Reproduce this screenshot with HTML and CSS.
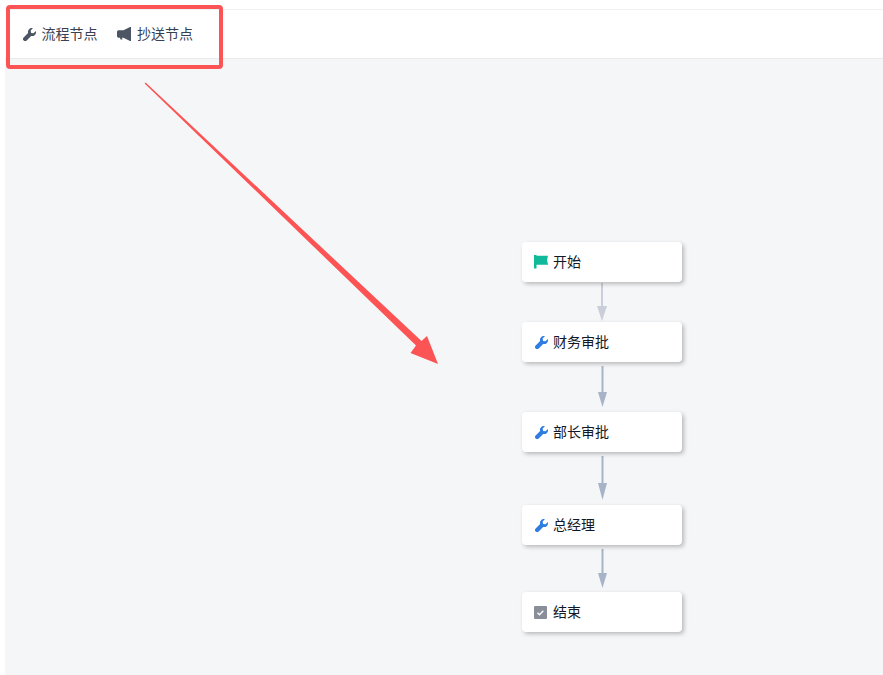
FILE: index.html
```html
<!DOCTYPE html>
<html lang="zh">
<head>
<meta charset="utf-8">
<title>流程</title>
<link rel="stylesheet" href="styles.css">
</head>
<body>
<div class="page">
  <div class="toolbar">
    <div class="tool">
      <svg class="ic-tool" viewBox="0 0 16 16"><path d="M15.800 3.800a4.800 4.800 0 0 1-5.800 6L4.600 15.300a2.400 2.400 0 0 1-3.800-3.700l5.500-5.400a4.800 4.800 0 0 1 5.900-6L9.400 3l.6 3 3 .6z"/></svg>
      <span>流程节点</span>
    </div>
    <div class="tool">
      <svg class="ic-horn" viewBox="0 0 14 14"><path d="M14 0v14h-1L6.500 10.800H5L5.500 12.500H3.500L3 10.800H1L0 9.500V4.500L1 3.200H6.500L13 0z"/></svg>
      <span>抄送节点</span>
    </div>
  </div>
  <div class="canvas">
    <svg class="edges" viewBox="0 0 878 616">
      <g class="edge-light">
        <path d="M597 224v33"/><path class="head" d="M592 247h10l-5 15z"/>
      </g>
      <g class="edge">
        <path d="M597.500 307v33"/><path class="head" d="M593 333h9l-4.500 15z"/>
        <path d="M597.500 397v34"/><path class="head" d="M593 424h9l-4.500 17z"/>
        <path d="M597.500 490v27"/><path class="head" d="M593 514h9l-4.500 15z"/>
      </g>
    </svg>
    <div class="node n1">
      <svg class="ic-flag" viewBox="0 0 14 14"><path d="M0 0h2.500v.8H14l-1 4.300 1 4.700H2.500V13.500H0z"/></svg>
      <span>开始</span>
    </div>
    <div class="node n2">
      <svg class="ic-tool blue" viewBox="0 0 16 16"><path d="M15.800 3.800a4.800 4.800 0 0 1-5.800 6L4.600 15.300a2.400 2.400 0 0 1-3.800-3.700l5.500-5.400a4.800 4.800 0 0 1 5.900-6L9.400 3l.6 3 3 .6z"/></svg>
      <span>财务审批</span>
    </div>
    <div class="node n3">
      <svg class="ic-tool blue" viewBox="0 0 16 16"><path d="M15.800 3.800a4.800 4.800 0 0 1-5.800 6L4.600 15.300a2.400 2.400 0 0 1-3.800-3.700l5.500-5.400a4.800 4.800 0 0 1 5.900-6L9.400 3l.6 3 3 .6z"/></svg>
      <span>部长审批</span>
    </div>
    <div class="node n4">
      <svg class="ic-tool blue" viewBox="0 0 16 16"><path d="M15.800 3.800a4.800 4.800 0 0 1-5.800 6L4.600 15.300a2.400 2.400 0 0 1-3.800-3.700l5.500-5.400a4.800 4.800 0 0 1 5.900-6L9.400 3l.6 3 3 .6z"/></svg>
      <span>总经理</span>
    </div>
    <div class="node n5">
      <svg class="ic-check" viewBox="0 0 13 13"><rect width="13" height="13" rx="1" fill="#8a8e99"/><path d="M3.500 6.800l2 2 3.800-4" fill="none" stroke="#fff" stroke-width="1.300"/></svg>
      <span>结束</span>
    </div>
  </div>
  <svg class="annotation" viewBox="0 0 883 675">
    <rect x="8" y="7" width="213" height="60" rx="2" fill="none" stroke="#fc5454" stroke-width="4"/>
    <path d="M144.600 83.400 L145.600 82.600 L421.500 341 L427 336 L438 364 L410.500 353 L416 345.500 Z" fill="#fc5454"/>
  </svg>
</div>
</body>
</html>
```
FILE: styles.css
```css
* { box-sizing: border-box; }
html, body { margin: 0; padding: 0; background: #fff; }
body { font-family: "Noto Sans CJK SC", "Noto Sans", sans-serif; font-size: 14px; }
.page { position: relative; width: 883px; height: 675px; overflow: hidden; padding: 9px 0 0 5px; display: flex; flex-direction: column; }
.toolbar { height: 50px; flex: none; display: flex; align-items: center; gap: 19.500px; padding: 0 0 0 18px; background: #fff; border-top: 1px solid #f0f1f3; border-bottom: 1px solid #e9eaec; color: #374151; }
.tool { display: flex; align-items: center; gap: 5.500px; line-height: 20px; }
.tool span, .node span { padding-bottom: 2px; }
.ic-tool { width: 13px; height: 13px; fill: #4b5563; flex: none; }
.ic-tool.blue { fill: #2f7de1; margin-left: 1px; }
.ic-horn { width: 14px; height: 14px; fill: #4b5563; flex: none; margin-right: .5px; }
.canvas { position: relative; flex: 1; background: #f5f6f8; }
.edges { position: absolute; left: 0; top: 0; width: 878px; height: 616px; }
.edge path { stroke: #a7b4c8; stroke-width: 2; fill: none; }
.edge-light path { stroke: #c9ced9; stroke-width: 2; fill: none; }
.edge path.head { fill: #a7b4c8; stroke: none; }
.edge-light path.head { fill: #c9ced9; stroke: none; }
.node { position: absolute; left: 517px; width: 160px; height: 40px; display: flex; align-items: center; gap: 5px; padding-left: 12px; background: #fff; border-radius: 4px; box-shadow: 2px 2px 4px rgba(0,0,0,.25); color: #111827; }
.n1 { top: 183px; }
.n2 { top: 263px; }
.n3 { top: 353px; }
.n4 { top: 446px; }
.n5 { top: 533px; }
.ic-flag { width: 14px; height: 14px; fill: #10b99a; flex: none; }
.ic-check { width: 13px; height: 13px; flex: none; margin-right: 1px; }
.annotation { position: absolute; left: 0; top: 0; width: 883px; height: 675px; pointer-events: none; }
```
